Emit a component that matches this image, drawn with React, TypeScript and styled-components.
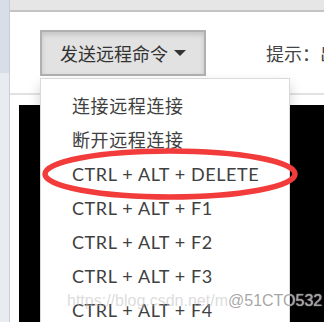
import React from "react";
import styled, { createGlobalStyle } from "styled-components";

const GlobalStyle = createGlobalStyle`
  html, body {
    margin: 0;
    padding: 0;
    background: #fff;
  }
  body {
    font-family: "Noto Sans CJK SC", sans-serif;
  }
`;

const commands = [
  "连接远程连接",
  "断开远程连接",
  "CTRL + ALT + DELETE",
  "CTRL + ALT + F1",
  "CTRL + ALT + F2",
  "CTRL + ALT + F3",
  "CTRL + ALT + F4",
];

const App = () => {
  return (
    <Page>
      <GlobalStyle />
      <Sidebar>
        <SideTop />
        <SideBottom />
      </Sidebar>
      <Main>
        <TopBar />
        <Toolbar>
          <Dropdown>
            <ToggleButton type="button">
              发送远程命令
              <Caret />
            </ToggleButton>
            <Menu>
              {commands.map((c) => (
                <MenuItem key={c}>{c}</MenuItem>
              ))}
            </Menu>
          </Dropdown>
          <Hint>提示：出</Hint>
        </Toolbar>
        <Divider />
        <Screen />
      </Main>
      <Highlight width="324" height="322" viewBox="0 0 324 322">
        <ellipse
          cx="170"
          cy="174"
          rx="125"
          ry="23"
          fill="none"
          stroke="#f23b3b"
          strokeWidth="5.5"
        />
      </Highlight>
      <Watermark>
        <Faint>https://blog.csdn.net/m</Faint>
        <Mark>@51CTO532</Mark>
      </Watermark>
    </Page>
  );
};

export default App;

const Page = styled.div`
  position: relative;
  display: flex;
  width: 324px;
  height: 322px;
  overflow: hidden;
`;

const Sidebar = styled.div`
  width: 9px;
  border-right: 1px solid #c9ced6;
  display: flex;
  flex-direction: column;
`;

const SideTop = styled.div`
  height: 73px;
  background: #d8dee8;
`;

const SideBottom = styled.div`
  flex: 1;
  background: #e8ecf1;
`;

const Main = styled.div`
  flex: 1;
  min-width: 0;
  display: flex;
  flex-direction: column;
`;

const TopBar = styled.div`
  height: 10px;
  background: #e6e6e6;
  border-bottom: 2px solid #c4c4c4;
`;

const Toolbar = styled.div`
  height: 81px;
  box-sizing: border-box;
  padding: 18px 0 0 30px;
  display: flex;
  align-items: flex-start;
  gap: 60px;
`;

const Dropdown = styled.div`
  position: relative;
  z-index: 2;
`;

const ToggleButton = styled.button`
  display: flex;
  align-items: center;
  height: 46px;
  box-sizing: border-box;
  padding: 0 18px;
  border: 2px solid #b0b0b0;
  border-radius: 0;
  background: #e2e2e2;
  box-shadow: inset 0 3px 5px rgba(0, 0, 0, 0.13);
  font-family: "Noto Sans CJK SC", sans-serif;
  font-size: 18px;
  color: #333;
  white-space: nowrap;
`;

const Caret = styled.span`
  display: inline-block;
  width: 0;
  height: 0;
  margin-left: 6px;
  border-top: 6px solid #333;
  border-left: 6px solid transparent;
  border-right: 6px solid transparent;
`;

const Menu = styled.ul`
  position: absolute;
  top: 48px;
  left: 0;
  width: 250px;
  box-sizing: border-box;
  margin: 0;
  padding: 10px 0;
  list-style: none;
  background: #fff;
  border: 1px solid rgba(0, 0, 0, 0.15);
  box-shadow: 0 6px 12px rgba(0, 0, 0, 0.175);
`;

const MenuItem = styled.li`
  height: 34px;
  line-height: 34px;
  padding-left: 31px;
  font-family: Lato, "Noto Sans CJK SC", sans-serif;
  font-size: 18px;
  letter-spacing: 0.6px;
  color: #404040;
  white-space: nowrap;
`;

const Hint = styled.div`
  line-height: 46px;
  font-family: "Noto Sans CJK SC", sans-serif;
  font-size: 18px;
  color: #444;
  white-space: nowrap;
`;

const Divider = styled.div`
  height: 2px;
  background: #e2e2e2;
`;

const Screen = styled.div`
  flex: 1;
  margin: 10px 0 0 9px;
  background: #000;
`;

const Highlight = styled.svg`
  position: absolute;
  left: 0;
  top: 0;
  z-index: 3;
  pointer-events: none;
`;

const Watermark = styled.div`
  position: absolute;
  left: 67px;
  top: 292px;
  z-index: 4;
  font-family: "Liberation Sans", sans-serif;
  font-size: 16px;
  white-space: nowrap;
  pointer-events: none;
`;

const Faint = styled.span`
  color: rgba(190, 190, 190, 0.55);
`;

const Mark = styled.span`
  color: rgba(150, 150, 150, 0.85);
  text-shadow: 0 0 1px #fff;
`;
